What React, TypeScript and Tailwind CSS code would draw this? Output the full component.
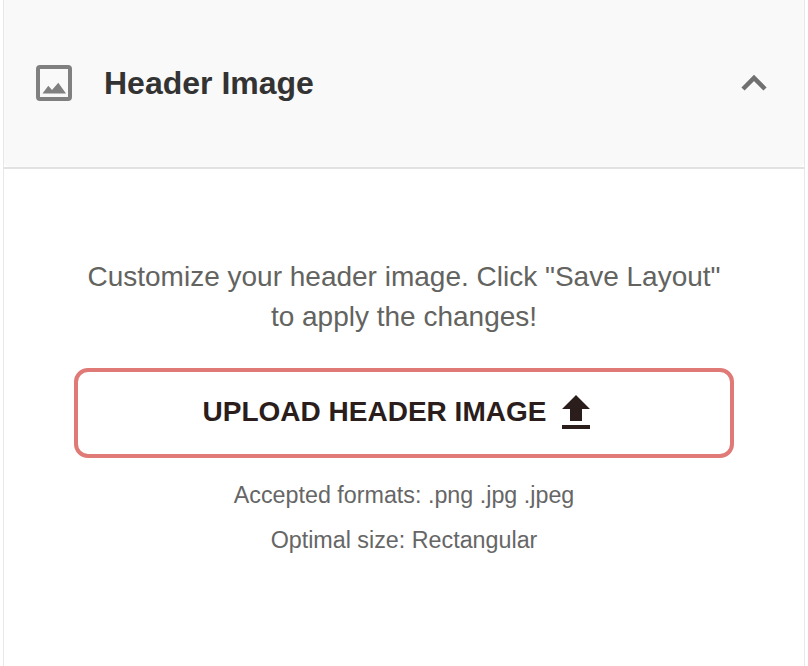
export default function App() {
  return (
    <div className="h-[666px] w-[808px] overflow-hidden bg-white font-['Liberation_Sans',Arial,sans-serif]">
      <div className="mx-[3px] h-full border-x border-[#e8e8e8]">
        {/* Header */}
        <div className="border-b-2 border-[#e2e2e2]">
          <div className="flex h-[167px] items-center rounded-b-[5px] bg-[#f9f9f9] pb-[1px] pl-[32px] pr-[36px]">
            <svg viewBox="0 0 36 36" className="h-[36px] w-[36px]" fill="none">
              <rect x="2" y="2" width="32" height="32" rx="2" stroke="#808080" strokeWidth="4" />
              <path d="M6.5 28.5 L12.3 20.7 L16 25 L22.3 17.7 L30 28.5 Z" fill="#808080" />
            </svg>
            <h2 className="ml-[32px] flex-1 pb-[1px] text-[32px] font-bold text-[#333]">Header Image</h2>
            <svg viewBox="0 0 28 20" className="h-[20px] w-[28px]" fill="none">
              <path d="M3 16 L14 5 L25 16" stroke="#707070" strokeWidth="4.5" />
            </svg>
          </div>
        </div>

        {/* Body */}
        <div className="flex flex-col items-center px-[70px] pt-[88px]">
          <p className="text-center text-[28px] leading-[40px] text-[#636360]">
            Customize your header image. Click "Save Layout" to apply the changes!
          </p>
          <button className="mt-[31px] flex h-[90px] w-[660px] items-center justify-center gap-[16px] rounded-[14px] border-[4px] border-[#e07a76] pb-[2px] pr-[15px] text-[28px] font-bold text-[#2a1d1b]">
            UPLOAD HEADER IMAGE
            <svg viewBox="0 0 28 34" className="h-[34px] w-[28px]" fill="#2a1d1b">
              <path d="M14 0 L28 14 H20 V26 H8 V14 H0 Z" />
              <rect x="0" y="30" width="28" height="4" />
            </svg>
          </button>
          <p className="mt-[23px] text-[23.3px] leading-[28px] text-[#666]">Accepted formats: .png .jpg .jpeg</p>
          <p className="mt-[17px] text-[23.3px] leading-[28px] text-[#666]">Optimal size: Rectangular</p>
        </div>
      </div>
    </div>
  )
}
